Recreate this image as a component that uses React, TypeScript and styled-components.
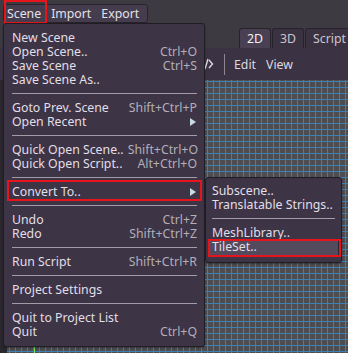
import React from "react";
import styled, { createGlobalStyle } from "styled-components";

const Global = createGlobalStyle`
  html, body { margin: 0; padding: 0; background: #3c3a40; }
  body { font-family: "Noto Sans", "DejaVu Sans", sans-serif; }
`;

const Root = styled.div`
  width: 348px;
  height: 353px;
  position: relative;
  overflow: hidden;
  display: flex;
  flex-direction: column;
  background: #3d3b41;
  font-family: "Noto Sans", "DejaVu Sans", sans-serif;
  font-size: 12.3px;
  color: #e2dfe6;
`;

const TopBar = styled.div`
  height: 48px;
  flex: none;
  display: flex;
  justify-content: space-between;
  align-items: flex-start;
`;

const MenuBar = styled.div`
  margin: 4px 0 0 3px;
  height: 17px;
  display: flex;
  align-items: center;
  gap: 4px;
  padding: 0 5px 0 0;
  background: #453c4e;
  border: 1px solid #28232c;
  border-radius: 3px;
`;

const MenuTitle = styled.div<{ $marked?: boolean }>`
  position: relative;
  padding: 0 3px;
  height: 17px;
  line-height: 17px;
  color: #e4e1e8;
  ${(p) =>
    p.$marked &&
    `
    &::after {
      content: "";
      position: absolute;
      left: 0px;
      right: -3px;
      top: -5px;
      bottom: -2px;
      border: 2px solid #e8141c;
    }
  `}
`;

const Tabs = styled.div`
  align-self: flex-end;
  display: flex;
  gap: 1px;
  margin-right: -6px;
`;

const Tab = styled.div<{ $active?: boolean }>`
  height: 19px;
  line-height: 19px;
  padding: 0 7px;
  border: 1px solid #27232b;
  border-bottom: none;
  border-radius: 3px 3px 0 0;
  background: ${(p) => (p.$active ? "#4a4053" : "#3a3241")};
  color: ${(p) => (p.$active ? "#f2f0f4" : "#cbc6d0")};
`;

const Toolbar = styled.div`
  height: 32px;
  flex: none;
  display: flex;
  align-items: center;
  background: #3b3343;
  padding-left: 198px;
`;

const ToolSep = styled.div`
  width: 1px;
  height: 21px;
  background: #8d8794;
  margin: 0 8px 0 10px;
`;

const ToolItem = styled.div`
  padding: 0 5px 0 1px;
  margin-right: 4px;
  color: #dcd8e0;
`;

const Viewport = styled.div`
  flex: 1;
  display: flex;
  background: #2b272e;
  padding-left: 7px;
`;

const Grid = styled.div`
  flex: 1;
  position: relative;
  background-color: #4d4c51;
  background-image: linear-gradient(to right, #3d80b4 1px, transparent 1px),
    linear-gradient(to bottom, #3d80b4 1px, transparent 1px);
  background-size: 6px 6px;
  background-position: 2px 1px;
`;

const AxisY = styled.div`
  position: absolute;
  left: 27px;
  top: 0;
  bottom: 0;
  width: 1px;
  background: #6fe05a;
`;

const Popup = styled.div<{ $x: number; $y: number; $w: number; $h: number }>`
  position: absolute;
  left: ${(p) => p.$x}px;
  top: ${(p) => p.$y}px;
  width: ${(p) => p.$w}px;
  height: ${(p) => p.$h}px;
  box-sizing: border-box;
  background: #3d3446;
  border: 1px solid #211d25;
  border-radius: 3px;
  box-shadow: 0 1px 2px rgba(0, 0, 0, 0.35);
  display: flex;
  flex-direction: column;
`;

const Row = styled.div<{ $padL: number; $padR: number; $marked?: boolean; $hover?: boolean }>`
  position: relative;
  height: 14px;
  line-height: 14px;
  display: flex;
  align-items: center;
  justify-content: space-between;
  gap: 4px;
  padding: 0 ${(p) => p.$padR}px 0 ${(p) => p.$padL}px;
  white-space: nowrap;
  ${(p) =>
    p.$hover &&
    `
    &::before {
      content: "";
      position: absolute;
      left: 2px;
      right: 2px;
      top: 0;
      bottom: -1px;
      background: #544a5d;
      border-right: 1px solid #2a2530;
    }
  `}
  ${(p) =>
    p.$marked &&
    `
    &::after {
      content: "";
      position: absolute;
      left: 3px;
      right: 2px;
      top: -5px;
      bottom: -2px;
      border: 2px solid #e8141c;
    }
  `}
`;

const Label = styled.span`
  position: relative;
  display: inline-block;
  height: 14px;
  line-height: 14px;
  color: #e2dfe6;
`;

const Shortcut = styled.span`
  position: relative;
  display: inline-block;
  height: 14px;
  line-height: 14px;
  color: #b3aeb8;
`;

const Arrow = styled.span`
  width: 0;
  height: 0;
  margin-right: 1px;
  border-top: 4px solid transparent;
  border-bottom: 4px solid transparent;
  border-left: 6px solid #c7dae3;
`;

const Sep = styled.div<{ $padL: number; $padR: number }>`
  height: 14px;
  flex: none;
  box-sizing: border-box;
  padding: 6px ${(p) => p.$padR}px 0 ${(p) => p.$padL}px;
  &::after {
    content: "";
    display: block;
    height: 1px;
    background: #a29ca8;
  }
`;

type Item =
  | { sep: true }
  | { label: string; shortcut?: string; arrow?: boolean; marked?: boolean; hover?: boolean };

const mainItems: Item[] = [
  { label: "New Scene" },
  { label: "Open Scene..", shortcut: "Ctrl+O" },
  { label: "Save Scene", shortcut: "Ctrl+S" },
  { label: "Save Scene As.." },
  { sep: true },
  { label: "Goto Prev. Scene", shortcut: "Shift+Ctrl+P" },
  { label: "Open Recent", arrow: true },
  { sep: true },
  { label: "Quick Open Scene..", shortcut: "Shift+Ctrl+O" },
  { label: "Quick Open Script..", shortcut: "Alt+Ctrl+O" },
  { sep: true },
  { label: "Convert To..", arrow: true, marked: true },
  { sep: true },
  { label: "Undo", shortcut: "Ctrl+Z" },
  { label: "Redo", shortcut: "Shift+Ctrl+Z" },
  { sep: true },
  { label: "Run Script", shortcut: "Shift+Ctrl+R" },
  { sep: true },
  { label: "Project Settings" },
  { sep: true },
  { label: "Quit to Project List" },
  { label: "Quit", shortcut: "Ctrl+Q" },
];

const subItems: Item[] = [
  { label: "Subscene.." },
  { label: "Translatable Strings.." },
  { sep: true },
  { label: "MeshLibrary.." },
  { label: "TileSet..", hover: true },
];

const SubMark = styled.div`
  position: absolute;
  left: 2px;
  right: 0px;
  top: 61px;
  height: 18px;
  border: 2px solid #e8141c;
  box-sizing: border-box;
`;

const MenuBody = styled.div<{ $pt: number }>`
  padding-top: ${(p) => p.$pt}px;
  display: flex;
  flex-direction: column;
`;

function renderItems(items: Item[], padL: number, padR: number, sepL: number, sepR: number) {
  return items.map((it, i) =>
    "sep" in it ? (
      <Sep key={i} $padL={sepL} $padR={sepR} />
    ) : (
      <Row key={i} $padL={padL} $padR={padR} $marked={it.marked} $hover={it.hover}>
        <Label>{it.label}</Label>
        {it.shortcut && <Shortcut>{it.shortcut}</Shortcut>}
        {it.arrow && <Arrow />}
      </Row>
    )
  );
}

const ScriptIcon = () => (
  <svg width="16" height="12" viewBox="0 0 16 12" fill="none" stroke="#dcd8e0" strokeWidth="1.4">
    <path d="M5 2 L1.5 6 L5 10" />
    <path d="M10 1 L7 11" />
    <path d="M11 2 L14.5 6 L11 10" />
  </svg>
);

export default function App() {
  return (
    <>
      <Global />
      <Root>
        <TopBar>
          <MenuBar>
            <MenuTitle $marked>Scene</MenuTitle>
            <MenuTitle>Import</MenuTitle>
            <MenuTitle>Export</MenuTitle>
          </MenuBar>
          <Tabs>
            <Tab $active>2D</Tab>
            <Tab>3D</Tab>
            <Tab>Script</Tab>
          </Tabs>
        </TopBar>
        <Toolbar>
          <ScriptIcon />
          <ToolSep />
          <ToolItem>Edit</ToolItem>
          <ToolItem>View</ToolItem>
        </Toolbar>
        <Viewport>
          <Grid>
            <AxisY />
          </Grid>
        </Viewport>

        <Popup $x={3} $y={23} $w={202} $h={324}>
          <MenuBody $pt={7}>{renderItems(mainItems, 8, 7, 8, 7)}</MenuBody>
        </Popup>

        <Popup $x={205} $y={177} $w={137} $h={86}>
          <MenuBody $pt={6}>{renderItems(subItems, 6, 6, 6, 6)}</MenuBody>
          <SubMark />
        </Popup>
      </Root>
    </>
  );
}
